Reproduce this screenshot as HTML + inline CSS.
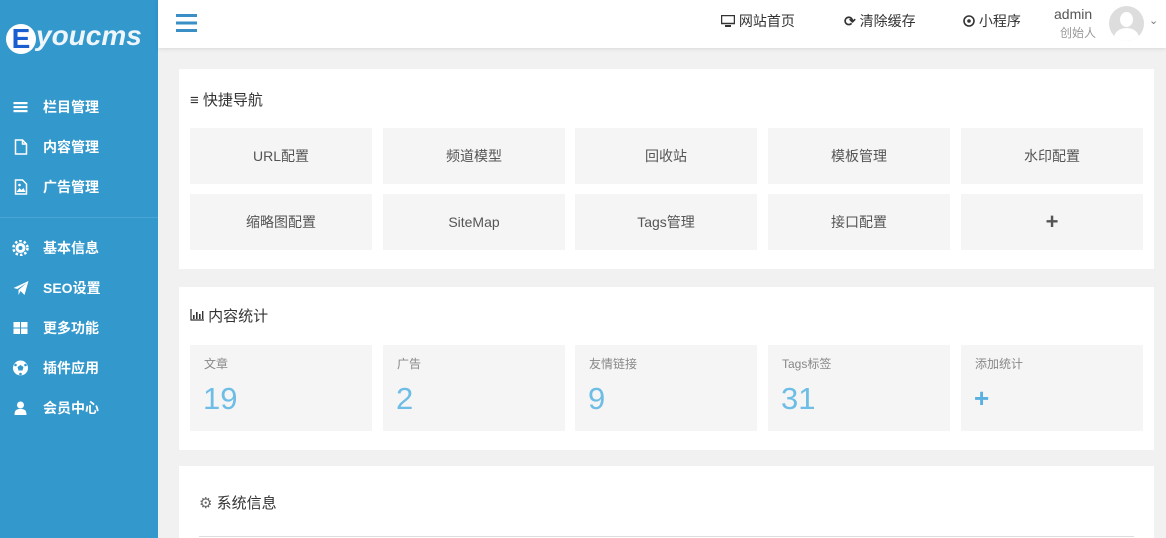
<!DOCTYPE html>
<html style="overflow:hidden;height:538px"><head><meta charset="utf-8"><style>
*{margin:0;padding:0;box-sizing:border-box}
body{width:1166px;height:538px;overflow:hidden;background:#f1f1f1;font-family:"Liberation Sans","Noto Sans CJK SC",sans-serif;position:relative}
.side{position:absolute;left:0;top:0;width:158px;height:538px;background:#3398cc;color:#fff}
.logo{position:absolute;left:6px;top:20px;font-size:28px;font-style:italic;font-weight:bold;color:#eef6fb}
.logo .e{display:inline-block;width:30px;height:30px;border-radius:50%;background:#fff;color:#1a5fd0;text-align:center;line-height:30px;font-style:normal;font-size:28px;vertical-align:-3px}
.mi{position:absolute;left:0;font-size:14px;font-weight:bold;height:20px;line-height:20px}
.mi .ic{position:absolute;left:12px;top:2px;width:17px;height:16px}
.mi span{position:absolute;left:43px;white-space:nowrap}
.sep{position:absolute;left:0;top:217px;width:158px;height:1px;background:#4aa5d4}
.head{position:absolute;left:158px;top:0;width:1008px;height:48px;background:#fff;box-shadow:0 1px 4px rgba(0,0,0,.1)}
.hn{position:absolute;top:11px;font-size:14px;color:#333;white-space:nowrap}
.panel{position:absolute;left:179px;width:975px;background:#fff}
.ttl{position:absolute;font-size:15px;color:#333}
.tile{position:absolute;width:182px;height:56px;background:#f5f5f5;text-align:center;line-height:56px;font-size:14px;color:#555}
.st{position:absolute;width:182px;height:86px;background:#f5f5f5}
.st .l{position:absolute;left:14px;top:10px;font-size:12px;color:#888}
.st .n{position:absolute;left:13px;top:36px;font-size:31px;color:#6dbde6}
</style></head><body>
<div class="side">
<div class="logo"><span class="e">E</span>youcms</div>
<div class="mi" style="top:97px"><svg class="ic" viewBox="0 0 16 16"><rect x="1" y="3" width="14" height="2.2" fill="#fff"/><rect x="1" y="7" width="14" height="2.2" fill="#fff"/><rect x="1" y="11" width="14" height="2.2" fill="#fff"/></svg><span>栏目管理</span></div>
<div class="mi" style="top:137px"><svg class="ic" viewBox="0 0 16 16"><path d="M3 1h7l4 4v10H3z M10 1v4h4" fill="none" stroke="#fff" stroke-width="1.5"/></svg><span>内容管理</span></div>
<div class="mi" style="top:177px"><svg class="ic" viewBox="0 0 16 16"><path d="M3 1h7l4 4v10H3z" fill="none" stroke="#fff" stroke-width="1.5"/><path d="M4 13l3-4 2 2 2-2 2 4z" fill="#fff"/><circle cx="7" cy="6" r="1.3" fill="#fff"/></svg><span>广告管理</span></div>
<div class="sep"></div>
<div class="mi" style="top:238px"><svg class="ic" viewBox="0 0 16 16"><circle cx="8" cy="8" r="5" fill="#fff"/><circle cx="8" cy="8" r="7" fill="none" stroke="#fff" stroke-width="2.5" stroke-dasharray="2.5 2"/><circle cx="8" cy="8" r="2" fill="#3398cc"/></svg><span>基本信息</span></div>
<div class="mi" style="top:278px"><svg class="ic" viewBox="0 0 16 16"><path d="M1 8L16 1 12 15 8 11 6 15 6 10 14 3 5 9z" fill="#fff"/></svg><span>SEO设置</span></div>
<div class="mi" style="top:318px"><svg class="ic" viewBox="0 0 16 16"><rect x="1" y="2" width="6.5" height="5.5" fill="#fff"/><rect x="8.5" y="2" width="6.5" height="5.5" fill="#fff"/><rect x="1" y="8.5" width="6.5" height="5.5" fill="#fff"/><rect x="8.5" y="8.5" width="6.5" height="5.5" fill="#fff"/></svg><span>更多功能</span></div>
<div class="mi" style="top:358px"><svg class="ic" viewBox="0 0 16 16"><circle cx="8" cy="8" r="7.5" fill="#fff"/><path d="M8 5l3 2-1 3.5H6L5 7z" fill="#3398cc"/><circle cx="3" cy="5" r="1.3" fill="#3398cc"/><circle cx="13" cy="5" r="1.3" fill="#3398cc"/><circle cx="8" cy="14" r="1.3" fill="#3398cc"/></svg><span>插件应用</span></div>
<div class="mi" style="top:398px"><svg class="ic" viewBox="0 0 16 16"><circle cx="8" cy="5" r="3.5" fill="#fff"/><path d="M2 15c0-5 2-6 6-6s6 1 6 6z" fill="#fff"/></svg><span>会员中心</span></div>
</div>
<div class="head">
<svg style="position:absolute;left:18px;top:13px" width="21" height="20" viewBox="0 0 21 20"><rect y="1" width="21" height="3" fill="#3a8fc6"/><rect y="8.5" width="21" height="3" fill="#3a8fc6"/><rect y="16" width="21" height="3" fill="#3a8fc6"/></svg>
<div class="hn" style="left:563px"><svg width="14" height="12" viewBox="0 0 14 12" style="vertical-align:-1px"><rect x="0.5" y="0.5" width="13" height="8" fill="none" stroke="#333" stroke-width="1.5"/><rect x="4" y="10" width="6" height="2" fill="#333"/></svg> 网站首页</div>
<div class="hn" style="left:686px"><span style="font-weight:bold">&#10227;</span> 清除缓存</div>
<div class="hn" style="left:805px"><svg width="12" height="12" viewBox="0 0 12 12" style="vertical-align:-1px"><circle cx="6" cy="6" r="5" fill="none" stroke="#333" stroke-width="1.6"/><circle cx="6" cy="6" r="1.8" fill="#333"/></svg> 小程序</div>
<div style="position:absolute;left:896px;top:6px;font-size:14px;color:#555">admin</div>
<div style="position:absolute;left:902px;top:24px;font-size:12px;color:#999">创始人</div>
<div style="position:absolute;left:951px;top:6px;width:35px;height:35px;border-radius:50%;background:#ddd;overflow:hidden"><div style="position:absolute;left:11px;top:6px;width:13px;height:15px;border-radius:50%;background:#fff"></div><div style="position:absolute;left:5px;top:22px;width:25px;height:20px;border-radius:50%;background:#fff"></div></div>
<div style="position:absolute;left:991px;top:14px;font-size:11px;color:#777">&#8964;</div>
</div>
<div class="panel" style="top:69px;height:200px">
<div class="ttl" style="left:11px;top:20px">&#8801; 快捷导航</div>
<div class="tile" style="left:11px;top:59px">URL配置</div>
<div class="tile" style="left:204px;top:59px">频道模型</div>
<div class="tile" style="left:396px;top:59px">回收站</div>
<div class="tile" style="left:589px;top:59px">模板管理</div>
<div class="tile" style="left:782px;top:59px">水印配置</div>
<div class="tile" style="left:11px;top:125px">缩略图配置</div>
<div class="tile" style="left:204px;top:125px">SiteMap</div>
<div class="tile" style="left:396px;top:125px">Tags管理</div>
<div class="tile" style="left:589px;top:125px">接口配置</div>
<div class="tile" style="left:782px;top:125px;font-size:22px;font-weight:bold;color:#555">+</div>
</div>
<div class="panel" style="top:287px;height:163px">
<div class="ttl" style="left:11px;top:18px"><svg width="14" height="12" viewBox="0 0 14 12"><path d="M1 0v11h13" fill="none" stroke="#333" stroke-width="1.2"/><rect x="3" y="6" width="1.6" height="4" fill="#333"/><rect x="6" y="3" width="1.6" height="7" fill="#333"/><rect x="9" y="5" width="1.6" height="5" fill="#333"/><rect x="12" y="2" width="1.4" height="8" fill="#333"/></svg> 内容统计</div>
<div class="st" style="left:11px;top:58px"><div class="l">文章</div><div class="n">19</div></div>
<div class="st" style="left:204px;top:58px"><div class="l">广告</div><div class="n">2</div></div>
<div class="st" style="left:396px;top:58px"><div class="l">友情链接</div><div class="n">9</div></div>
<div class="st" style="left:589px;top:58px"><div class="l">Tags标签</div><div class="n">31</div></div>
<div class="st" style="left:782px;top:58px"><div class="l">添加统计</div><div class="n" style="font-weight:bold;font-size:26px;top:38px;color:#5ab0e0">+</div></div>
</div>
<div class="panel" style="top:466px;height:72px;overflow:hidden">
<div class="ttl" style="left:20px;top:26px"><span style="color:#666">&#9881;</span> 系统信息</div>
<div style="position:absolute;left:20px;top:70px;width:935px;height:1px;background:#ddd"></div>
</div>
</body></html>
